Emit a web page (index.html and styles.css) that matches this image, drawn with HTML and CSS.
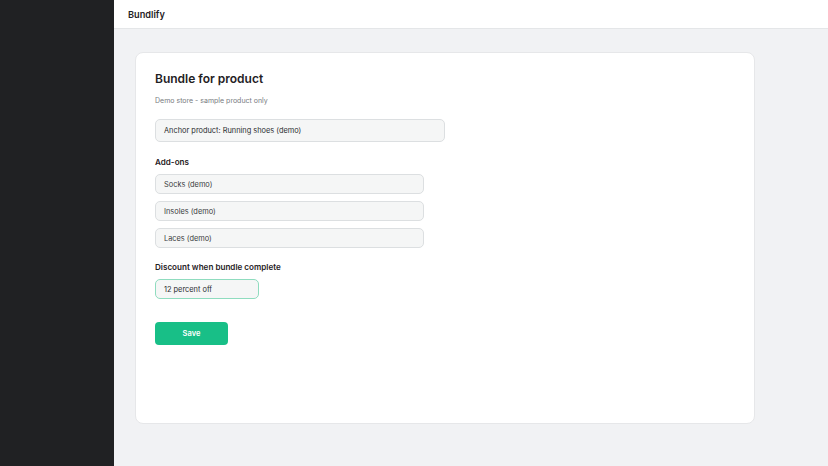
FILE: index.html
```html
<!DOCTYPE html>
<html lang="en">

<head>
  <meta charset="UTF-8">
  <meta name="viewport" content="width=device-width, initial-scale=1.0">
  <title>Bundlify</title>
  <link rel="stylesheet" href="styles.css">
</head>

<body>
  <div class="app">
    <aside class="sidebar"></aside>

    <div class="main">
      <header class="topbar">Bundlify</header>

      <div class="content">
        <div class="card">
          <h2>Bundle for product</h2>
          <p class="subtitle">Demo store - sample product only</p>

          <div class="field anchor">Anchor product: Running shoes (demo)</div>

          <h3>Add-ons</h3>
          <div class="addons">
            <div class="field addon">Socks (demo)</div>
            <div class="field addon">Insoles (demo)</div>
            <div class="field addon">Laces (demo)</div>
          </div>

          <h3 class="discount-label">Discount when bundle complete</h3>
          <div class="field discount">12 percent off</div>

          <button class="save-button">Save</button>
        </div>
      </div>
    </div>
  </div>
</body>

</html>
```

FILE: styles.css
```css
* {
  box-sizing: border-box;
  margin: 0;
  padding: 0;
  font-family: 'Inter', 'Liberation Sans', sans-serif;
}

body {
  background: #f1f2f4;
  color: #1f2124;
}

.app {
  display: flex;
  min-height: 100vh;
}

.sidebar {
  width: 114px;
  flex-shrink: 0;
  background: #202123;
}

.main {
  flex: 1;
  display: flex;
  flex-direction: column;
}

.topbar {
  height: 29px;
  background: white;
  border-bottom: 1px solid #e4e6e8;
  padding: 1px 14px 0;
  display: flex;
  align-items: center;
  font-size: 9.2px;
  font-weight: 600;
}

.content {
  padding: 23px 21px;
}

.card {
  background: white;
  width: 620px;
  height: 372px;
  border: 1px solid #e6e7e9;
  border-radius: 8px;
  padding: 18px 19px;
}

h2 {
  font-size: 12px;
  line-height: 16px;
  font-weight: 600;
}

.subtitle {
  font-size: 7px;
  line-height: 10px;
  color: #777b80;
  margin-top: 9px;
}

h3 {
  font-size: 8.1px;
  line-height: 11px;
  font-weight: 600;
  margin-top: 15px;
  margin-bottom: 6px;
}

.discount-label {
  margin-top: 14px;
}

.field {
  background: #f5f6f6;
  border: 1px solid #dcdfe1;
  border-radius: 5px;
  font-size: 7.4px;
  color: #2b2d30;
  padding: 0 8px;
  display: flex;
  align-items: center;
}

.anchor {
  width: 290px;
  height: 23px;
  margin-top: 13px;
}

.addons {
  display: flex;
  flex-direction: column;
  gap: 7px;
}

.addon {
  width: 269px;
  height: 20px;
  color: #3a3c40;
}

.discount {
  width: 104px;
  height: 20px;
  border-color: #8fdcbf;
}

.save-button {
  display: block;
  margin-top: 23px;
  width: 73px;
  height: 23px;
  background: #18bf87;
  color: white;
  border: none;
  border-radius: 4px;
  font-size: 7.5px;
  font-weight: 600;
  cursor: pointer;
}
```
